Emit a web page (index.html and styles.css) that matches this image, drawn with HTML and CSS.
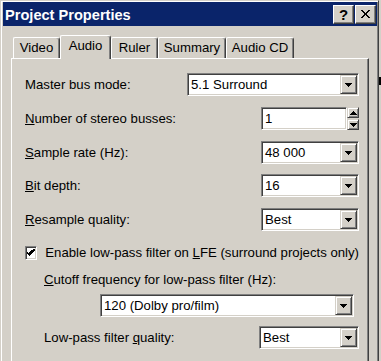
FILE: index.html
```html
<!DOCTYPE html>
<html>
<head>
<meta charset="utf-8">
<title>Project Properties</title>
<link rel="stylesheet" href="styles.css">
</head>
<body>
<div class="window">
  <div class="titlebar">
    <span class="title">Project Properties</span>
    <div class="tbtns">
      <span class="tbtn help">?</span>
      <span class="tbtn"><svg width="9" height="8" viewBox="0 0 9 8" shape-rendering="crispEdges"><path d="M0 0h2l2.5 3 2.5-3h2l-3.5 4 3.5 4h-2l-2.5-3-2.5 3h-2l3.5-4z" fill="#000"/></svg></span>
    </div>
  </div>
  <div class="content">
    <div class="tabs">
      <div class="tab w-video">Video</div>
      <div class="tab active w-audio">Audio</div>
      <div class="tab w-ruler">Ruler</div>
      <div class="tab w-summary">Summary</div>
      <div class="tab w-cd">Audio CD</div>
    </div>
    <div class="panel">
      <div class="row">
        <span class="lbl">Master bus mode:</span>
        <div class="combo w-wide"><span class="val">5.1 Surround</span><span class="drop"><svg width="7" height="4" viewBox="0 0 7 4" shape-rendering="crispEdges"><path d="M0 0h7v1h-1v1h-1v1h-1v1h-1v-1h-1v-1h-1v-1h-1z" fill="#000"/></svg></span></div>
      </div>
      <div class="row gap11">
        <span class="lbl"><span class="u">N</span>umber of stereo busses:</span>
        <div class="edit"><span class="val">1</span></div>
        <div class="spin">
          <span class="sbtn"><svg width="7" height="4" viewBox="0 0 7 4" shape-rendering="crispEdges"><path d="M3 0h1v1h1v1h1v1h1v1h-7v-1h1v-1h1v-1h1z" fill="#000"/></svg></span>
          <span class="sbtn"><svg width="7" height="4" viewBox="0 0 7 4" shape-rendering="crispEdges"><path d="M0 0h7v1h-1v1h-1v1h-1v1h-1v-1h-1v-1h-1v-1h-1z" fill="#000"/></svg></span>
        </div>
      </div>
      <div class="row gap11">
        <span class="lbl"><span class="u">S</span>ample rate (Hz):</span>
        <div class="combo w-small"><span class="val">48 000</span><span class="drop"><svg width="7" height="4" viewBox="0 0 7 4" shape-rendering="crispEdges"><path d="M0 0h7v1h-1v1h-1v1h-1v1h-1v-1h-1v-1h-1v-1h-1z" fill="#000"/></svg></span></div>
      </div>
      <div class="row gap10">
        <span class="lbl"><span class="u">B</span>it depth:</span>
        <div class="combo w-small"><span class="val">16</span><span class="drop"><svg width="7" height="4" viewBox="0 0 7 4" shape-rendering="crispEdges"><path d="M0 0h7v1h-1v1h-1v1h-1v1h-1v-1h-1v-1h-1v-1h-1z" fill="#000"/></svg></span></div>
      </div>
      <div class="row gap11">
        <span class="lbl"><span class="u">R</span>esample quality:</span>
        <div class="combo w-small"><span class="val">Best</span><span class="drop"><svg width="7" height="4" viewBox="0 0 7 4" shape-rendering="crispEdges"><path d="M0 0h7v1h-1v1h-1v1h-1v1h-1v-1h-1v-1h-1v-1h-1z" fill="#000"/></svg></span></div>
      </div>
      <div class="row gap10">
        <span class="check"><svg width="8" height="7" viewBox="0 0 8 7" shape-rendering="crispEdges"><path d="M7 0h1v2h-1v1h-1v1h-1v1h-1v1h-1v1h-1v-1h-1v-1h-1v-1h-1v-2h1v1h1v1h1v-1h1v-1h1v-1h1z" fill="#000"/></svg></span>
        <span class="chk-lbl">Enable low-pass filter on <span class="u">L</span>FE (surround projects only)</span>
      </div>
      <div class="row gap4">
        <span class="lbl indent"><span class="u">C</span>utoff frequency for low-pass filter (Hz):</span>
      </div>
      <div class="row gap3">
        <div class="combo w-long"><span class="val">120 (Dolby pro/film)</span><span class="drop"><svg width="7" height="4" viewBox="0 0 7 4" shape-rendering="crispEdges"><path d="M0 0h7v1h-1v1h-1v1h-1v1h-1v-1h-1v-1h-1v-1h-1z" fill="#000"/></svg></span></div>
      </div>
      <div class="row gap9">
        <span class="lbl indent">Low-pass filter <span class="u">q</span>uality:</span>
        <div class="combo w-mid"><span class="val">Best</span><span class="drop"><svg width="7" height="4" viewBox="0 0 7 4" shape-rendering="crispEdges"><path d="M0 0h7v1h-1v1h-1v1h-1v1h-1v-1h-1v-1h-1v-1h-1z" fill="#000"/></svg></span></div>
      </div>
    </div>
  </div>
</div>
<span class="bgfrag"></span>
</body>
</html>
```

FILE: styles.css
```css
html, body {
  margin: 0;
  padding: 0;
  background: #d4d0c8;
}

body {
  width: 381px;
  height: 361px;
  overflow: hidden;
  position: relative;
  font-family: "Liberation Sans", Arial, sans-serif;
  font-size: 13.2px;
  color: #000;
}

.window {
  width: 379px;
  height: 361px;
  box-sizing: border-box;
  border-style: solid;
  border-width: 1px 1px 0 1px;
  border-color: #d4d0c8 #404040 #404040 #d4d0c8;
  box-shadow: inset 1px 1px #fff, inset -1px 0 #808080;
  padding: 1px 1px 0 2px;
  background: #d4d0c8;
  overflow: hidden;
}

.titlebar {
  height: 24px;
  background: #0a246a;
  display: flex;
  align-items: center;
  padding: 0 1px 0 2px;
}

.title {
  flex: 1;
  color: #fff;
  font-weight: bold;
  font-size: 14.6px;
  line-height: 18px;
  padding-top: 1px;
}

.tbtns {
  display: flex;
  gap: 1px;
}

.tbtn {
  width: 21px;
  height: 19px;
  box-sizing: border-box;
  background: #d4d0c8;
  border: 1px solid;
  border-color: #fff #404040 #404040 #fff;
  box-shadow: inset -1px -1px #808080;
  display: flex;
  align-items: center;
  justify-content: center;
}

.help {
  font-weight: bold;
  font-size: 15px;
  line-height: 15px;
  padding-top: 1px;
}

.content {
  margin-left: 8px;
  width: 358px;
}

.tabs {
  display: flex;
  align-items: flex-end;
  height: 23px;
  margin-top: 9px;
  padding-left: 2px;
}

.tab {
  height: 21px;
  box-sizing: border-box;
  border-top: 1px solid #fff;
  border-left: 1px solid #fff;
  border-right: 1px solid #404040;
  box-shadow: inset -1px 0 #808080;
  border-radius: 2px 3px 0 0;
  background: #d4d0c8;
  display: flex;
  justify-content: center;
  padding-top: 2px;
  line-height: 15px;
}

.tab.active {
  height: 24px;
  margin-bottom: -1px;
  position: relative;
  z-index: 2;
}

.w-video { width: 47px; }
.w-audio { width: 51px; }
.w-ruler { width: 47px; }
.w-summary { width: 68px; }
.w-cd { width: 68px; }

.panel {
  box-sizing: border-box;
  width: 358px;
  height: 303px;
  border-top: 1px solid #fff;
  border-left: 1px solid #fff;
  border-right: 1px solid #404040;
  box-shadow: inset -1px 0 #808080;
  padding: 14px 9px 0 13px;
}

.row {
  display: flex;
  align-items: center;
  height: 23px;
}

.gap11 { margin-top: 11px; }
.gap10 { margin-top: 10px; }
.gap9 { margin-top: 9px; }
.gap4 { margin-top: 4px; }
.gap3 { margin-top: 3px; }

.lbl {
  flex: 1;
  white-space: nowrap;
}

.indent {
  padding-left: 19px;
}

.u {
  text-decoration: underline;
}

.combo,
.edit {
  display: flex;
  height: 23px;
  box-sizing: border-box;
  border: 1px solid;
  border-color: #808080 #fff #fff #808080;
  box-shadow: inset 1px 1px #404040, inset -1px -1px #d4d0c8;
  background: #fff;
  padding: 1px;
}

.val {
  flex: 1;
  padding-left: 2px;
  line-height: 19px;
  white-space: nowrap;
  overflow: hidden;
}

.drop {
  width: 17px;
  height: 19px;
  box-sizing: border-box;
  background: #d4d0c8;
  border: 1px solid;
  border-color: #d4d0c8 #404040 #404040 #d4d0c8;
  box-shadow: inset 1px 1px #fff, inset -1px -1px #808080;
  display: flex;
  align-items: center;
  justify-content: center;
}

.drop svg {
  margin-top: 1px;
}

.w-wide { width: 172px; }
.w-small { width: 98px; }
.w-mid { width: 100px; }
.w-long { width: 254px; margin-left: 75px; }

.edit {
  width: 86px;
}

.spin {
  display: flex;
  flex-direction: column;
  gap: 1px;
  width: 12px;
  height: 23px;
}

.sbtn {
  height: 11px;
  box-sizing: border-box;
  background: #d4d0c8;
  border: 1px solid;
  border-color: #d4d0c8 #404040 #404040 #d4d0c8;
  box-shadow: inset 1px 1px #fff, inset -1px -1px #808080;
  display: flex;
  align-items: center;
  justify-content: center;
}

.check {
  width: 14px;
  height: 14px;
  box-sizing: border-box;
  border: 1px solid;
  border-color: #808080 #fff #fff #808080;
  box-shadow: inset 1px 1px #404040, inset -1px -1px #d4d0c8;
  background: #fff;
  display: flex;
  align-items: center;
  justify-content: center;
  margin-right: 8px;
}

.chk-lbl {
  white-space: nowrap;
}

.bgfrag {
  position: absolute;
  left: 379px;
  top: 77px;
  width: 2px;
  height: 8px;
  background: #000;
}
```
